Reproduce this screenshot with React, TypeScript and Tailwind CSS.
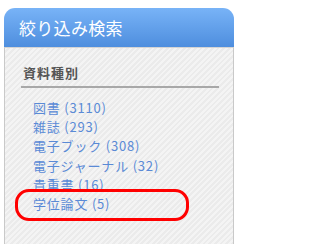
import React from "react";

const items = [
  "図書 (3110)",
  "雑誌 (293)",
  "電子ブック (308)",
  "電子ジャーナル (32)",
  "貴重書 (16)",
  "学位論文 (5)",
];

export default function App() {
  return (
    <div
      className="relative w-[243px] h-[244px] bg-white pt-2 pl-1 overflow-hidden"
      style={{ fontFamily: '"Noto Sans CJK JP", "Noto Sans", sans-serif' }}
    >
      <div className="flex flex-col w-[230px] h-[236px]">
        <div className="h-[39px] shrink-0 rounded-t-[11px] bg-gradient-to-b from-[#78b3f7] to-[#4e8ede] text-white text-[17px] pl-[15px] flex items-center tracking-[0.3px]">
          絞り込み検索
        </div>
        <div className="flex-1 border-l border-r border-t border-l-[#c9c9c9] border-r-[#c9c9c9] border-t-[#d4d4d4] bg-[repeating-linear-gradient(135deg,#f4f4f4_0px,#f4f4f4_2px,#ebebeb_2px,#ebebeb_4px)] px-4 pt-[15px]">
          <div className="text-[13px] font-bold text-[#555] leading-[20px] pl-[2px] tracking-[1px]">資料種別</div>
          <div className="mt-[3px] h-[2px] w-[198px] bg-[#a8a8a8]" />
          <ul className="mt-[10px] pl-3 text-[13px] leading-[19.2px] text-[#5a8ad6] tracking-[0.8px]">
            {items.map((t) => (
              <li key={t}>{t}</li>
            ))}
          </ul>
        </div>
      </div>
      <div className="absolute left-[15px] top-[189px] w-[174px] h-[32px] rounded-[14px] border-[3px] border-[#f00]" />
    </div>
  );
}
